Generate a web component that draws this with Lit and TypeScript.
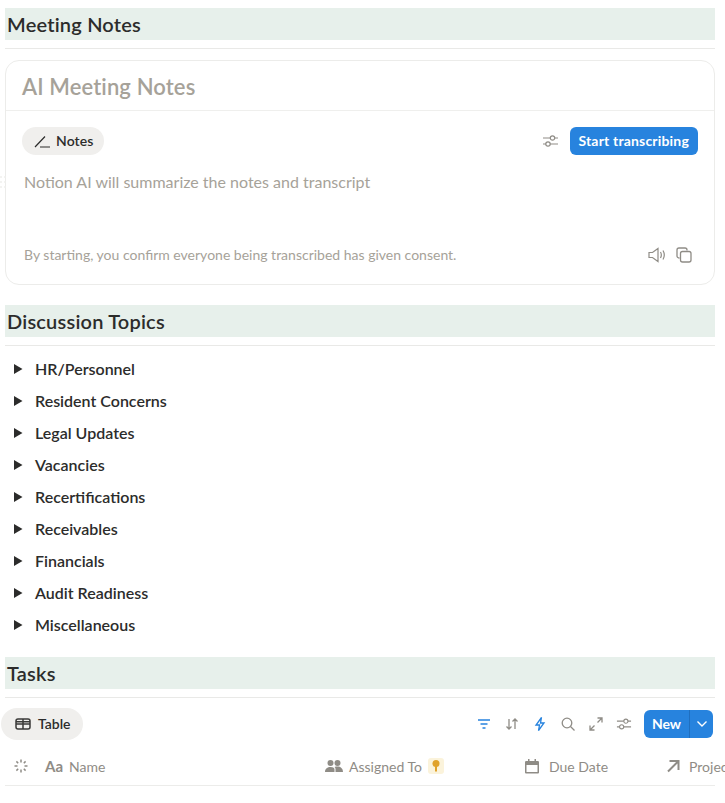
import { LitElement, html, css, svg } from 'lit';
import { customElement } from 'lit/decorators.js';

const TOPICS = [
  'HR/Personnel',
  'Resident Concerns',
  'Legal Updates',
  'Vacancies',
  'Recertifications',
  'Receivables',
  'Financials',
  'Audit Readiness',
  'Miscellaneous',
];

const sliders = svg`<path d="M1 5h15M1 11h15" stroke="currentColor" stroke-width="1.2" fill="none"/><circle cx="10.5" cy="5" r="2.2" fill="#fff" stroke="currentColor" stroke-width="1.2"/><circle cx="6" cy="11" r="2.2" fill="#fff" stroke="currentColor" stroke-width="1.2"/>`;

@customElement('app-root')
export class AppRoot extends LitElement {
  static styles = css`
    :host {
      display: block;
      width: 725px;
      height: 803px;
      overflow: hidden;
      position: relative;
      background: #fff;
      font-family: 'Lato', 'Noto Sans', sans-serif;
      color: #2c2c2b;
    }
    .page {
      padding: 8px 10px 0 5px;
      display: flex;
      flex-direction: column;
    }
    .band {
      height: 32px;
      background: #e7f0eb;
      padding-left: 2px;
      font-size: 20px;
      font-weight: 600;
      letter-spacing: 0.2px;
      line-height: 32px;
      white-space: nowrap;
    }
    .rule {
      height: 1px;
      background: #e9e9e7;
      margin-top: 8px;
    }
    .card {
      margin-top: 11px;
      height: 225px;
      box-sizing: border-box;
      border: 1px solid #ececea;
      border-radius: 14px;
      display: flex;
      flex-direction: column;
    }
    .card-title {
      height: 50px;
      box-sizing: border-box;
      border-bottom: 1px solid #efefed;
      padding-left: 16px;
      font-size: 22px;
      font-weight: 600;
      letter-spacing: 0.12px;
      line-height: 52px;
      color: #a6a299;
    }
    .card-bar {
      display: flex;
      align-items: center;
      justify-content: space-between;
      padding: 16px 16px 0;
    }
    .pill {
      display: flex;
      align-items: center;
      gap: 5px;
      height: 28px;
      box-sizing: border-box;
      padding: 0 10px 2px 12px;
      background: #f0efed;
      border-radius: 14px;
      font-size: 14px;
      font-weight: 600;
      letter-spacing: 0.1px;
      color: #2c2c2b;
    }
    .pill svg {
      margin-top: 2px;
    }
    .bar-right {
      display: flex;
      align-items: center;
      gap: 11px;
    }
    .icon-gray {
      color: #8f8c86;
      display: block;
    }
    .blue-btn {
      height: 28px;
      box-sizing: border-box;
      padding: 0 9px 2px 8px;
      display: flex;
      align-items: center;
      background: #2783de;
      color: #fff;
      border-radius: 6px;
      font-size: 14px;
      font-weight: 700;
      letter-spacing: 0.18px;
    }
    .placeholder {
      margin: 17px 0 0 18px;
      font-size: 16px;
      line-height: 20px;
      color: #a6a299;
    }
    .card-foot {
      margin-top: auto;
      height: 59px;
      box-sizing: border-box;
      padding: 0 22px 0 18px;
      display: flex;
      align-items: center;
      justify-content: space-between;
      font-size: 14px;
      color: #a6a299;
    }
    .foot-icons {
      display: flex;
      gap: 10px;
      align-items: center;
    }
    .section {
      margin-top: 20px;
    }
    .topics {
      padding-top: 6px;
      display: flex;
      flex-direction: column;
    }
    .topic {
      height: 32px;
      display: flex;
      align-items: center;
      gap: 12px;
      padding-left: 8px;
      font-size: 16px;
      font-weight: 600;
    }
    .tri {
      width: 10px;
      height: 10px;
      margin-top: 1px;
      flex: none;
    }
    .tasks {
      margin-top: 17px;
    }
    .toolbar {
      display: flex;
      align-items: center;
      justify-content: space-between;
      margin: 10px 2px 0 -4px;
    }
    .tab {
      height: 32px;
      box-sizing: border-box;
      padding: 0 12px 2px 14px;
      display: flex;
      align-items: center;
      gap: 7px;
      border-radius: 16px;
      background: #f0efed;
      font-size: 14px;
      font-weight: 600;
    }
    .tab svg {
      margin-top: 2px;
    }
    .tools {
      display: flex;
      align-items: center;
      gap: 12px;
    }
    .tools svg {
      display: block;
    }
    .new {
      height: 28px;
      display: flex;
      background: #2783de;
      border-radius: 6px;
      color: #fff;
      font-size: 14px;
      font-weight: 700;
      overflow: hidden;
    }
    .new-label {
      width: 45px;
      justify-content: center;
      padding-bottom: 2px;
      box-sizing: border-box;
      display: flex;
      align-items: center;
    }
    .new-caret {
      width: 24px;
      box-sizing: border-box;
      border-left: 1px solid #1f6fc0;
      display: flex;
      align-items: center;
      justify-content: center;
    }
    .head {
      margin-top: 7px;
      height: 38px;
      border-bottom: 1px solid #ececea;
      display: grid;
      grid-template-columns: 32px 280px 199px 142px 200px;
      align-items: center;
      padding-left: 8px;
      font-size: 14px;
      color: #8f8c86;
      white-space: nowrap;
    }
    .col {
      display: flex;
      align-items: center;
      gap: 6px;
    }
    .col.wide {
      gap: 9px;
    }
    .col svg {
      flex: none;
    }
    .aa {
      font-size: 15px;
      font-weight: 700;
      width: 18px;
    }
    .key {
      width: 16px;
      height: 16px;
      border-radius: 3px;
      background: #fbf3db;
      display: flex;
      align-items: center;
      justify-content: center;
    }
    .drag {
      position: absolute;
      left: 0;
      top: 175px;
    }
  `;

  render() {
    return html`
      <svg class="drag" width="7" height="14" viewBox="0 0 7 14" fill="#efefed">
        <circle cx="1" cy="2" r="1"/><circle cx="5" cy="2" r="1"/>
        <circle cx="1" cy="7" r="1"/><circle cx="5" cy="7" r="1"/>
        <circle cx="1" cy="12" r="1"/><circle cx="5" cy="12" r="1"/>
      </svg>
      <div class="page">
        <div class="band">Meeting Notes</div>
        <div class="rule"></div>
        <div class="card">
          <div class="card-title">AI Meeting Notes</div>
          <div class="card-bar">
            <div class="pill">
              <svg width="17" height="16" viewBox="0 0 17 16" fill="none" stroke="#2c2c2b" stroke-width="1.2">
                <path d="M1 14 11 3.500M6 14h10"/>
              </svg>
              Notes
            </div>
            <div class="bar-right">
              <svg class="icon-gray" width="17" height="16" viewBox="0 0 17 16">${sliders}</svg>
              <div class="blue-btn">Start transcribing</div>
            </div>
          </div>
          <div class="placeholder">Notion AI will summarize the notes and transcript</div>
          <div class="card-foot">
            <span>By starting, you confirm everyone being transcribed has given consent.</span>
            <div class="foot-icons">
              <svg class="icon-gray" width="18" height="16" viewBox="0 0 18 16" fill="none" stroke="currentColor" stroke-width="1.2">
                <path d="M1 5.500h3.500L10 1.500v13l-5.500-4H1z"/>
                <path d="M12.500 5c1 1.800 1 4.200 0 6M15 3.500c1.600 2.800 1.600 6.200 0 9"/>
              </svg>
              <svg class="icon-gray" width="16" height="16" viewBox="0 0 16 16" fill="none" stroke="currentColor" stroke-width="1.300">
                <path d="M3.500 11H3a2 2 0 0 1-2-2V3a2 2 0 0 1 2-2h6a2 2 0 0 1 2 2v.5"/>
                <rect x="4.500" y="4.500" width="10.500" height="10.500" rx="2"/>
              </svg>
            </div>
          </div>
        </div>

        <div class="section">
          <div class="band">Discussion Topics</div>
          <div class="rule"></div>
        </div>
        <div class="topics">
          ${TOPICS.map(
            (t) => html`<div class="topic">
              <svg class="tri" viewBox="0 0 10 10" fill="#2c2c2b"><path d="M1 0 9.500 5 1 10z"/></svg>
              <span>${t}</span>
            </div>`
          )}
        </div>

        <div class="section tasks">
          <div class="band">Tasks</div>
          <div class="rule"></div>
        </div>
        <div class="toolbar">
          <div class="tab">
            <svg width="16" height="14" viewBox="0 0 16 14" fill="none" stroke="#3a3a38" stroke-width="1.500">
              <rect x="1" y="2" width="14" height="10" rx="2"/>
              <path d="M1 7h14M8 2v10M1 4.700h14"/>
            </svg>
            Table
          </div>
          <div class="tools">
            <svg width="16" height="16" viewBox="0 0 16 16" fill="none" stroke="#2783de" stroke-width="1.500">
              <path d="M2 4h12M4.500 8h7M6.500 12h3"/>
            </svg>
            <svg width="16" height="16" viewBox="0 0 16 16" fill="none" stroke="#8f8c86" stroke-width="1.300">
              <path d="M5 3v10M2.500 10.500 5 13l2.500-2.500M11 13V3M8.500 5.500 11 3l2.500 2.500"/>
            </svg>
            <svg width="16" height="16" viewBox="0 0 16 16" fill="none" stroke="#2783de" stroke-width="1.300">
              <path d="M9.500 1.500 4 9h3.500l-1 5.500L12 7H8.500z"/>
            </svg>
            <svg width="16" height="16" viewBox="0 0 16 16" fill="none" stroke="#8f8c86" stroke-width="1.300">
              <circle cx="7" cy="7" r="4.800"/><path d="M10.500 10.500 14.500 14.500"/>
            </svg>
            <svg width="16" height="16" viewBox="0 0 16 16" fill="none" stroke="#8f8c86" stroke-width="1.300">
              <path d="M9.500 6.500 14 2M9.500 2H14v4.500M6.500 9.500 2 14M2 9.500V14h4.500"/>
            </svg>
            <svg class="icon-gray" width="16" height="16" viewBox="0 0 17 16">${sliders}</svg>
            <div class="new">
              <div class="new-label">New</div>
              <div class="new-caret">
                <svg width="12" height="8" viewBox="0 0 12 8" fill="none" stroke="#fff" stroke-width="1.400"><path d="M1.500 1.500 6 6l4.500-4.500"/></svg>
              </div>
            </div>
          </div>
        </div>
        <div class="head">
          <div class="col">
            <svg width="16" height="16" viewBox="0 0 16 16" fill="none" stroke="#8f8c86" stroke-width="1.500">
              <path d="M8 1.500v3M8 11.500v3M1.500 8h3M11.500 8h3M3.400 3.400l1.800 1.800M10.800 10.800l1.800 1.800M3.400 12.600l1.800-1.800M10.800 5.200l1.800-1.800"/>
            </svg>
          </div>
          <div class="col"><span class="aa">Aa</span><span>Name</span></div>
          <div class="col">
            <svg width="18" height="14" viewBox="0 0 18 14" fill="#8f8c86">
              <circle cx="5.500" cy="4" r="3"/><circle cx="12.500" cy="4" r="3"/>
              <path d="M0 13c0-3.500 2.500-5 5.500-5s4 1 4 2.500V13zM10.500 13v-3c0-1-.4-1.600-1-2.100C10.500 7.700 11.500 7.600 12.500 7.600c3 0 5.500 1.900 5.500 5.400z"/>
            </svg>
            <span>Assigned To</span>
            <span class="key">
              <svg width="8" height="12" viewBox="0 0 8 12" fill="#e0a22b">
                <circle cx="4" cy="3.500" r="3.500"/><path d="M3 6h2v5l-1 1-1-1z"/>
              </svg>
            </span>
          </div>
          <div class="col wide">
            <svg width="16" height="16" viewBox="0 0 16 16" fill="#8f8c86">
              <path d="M2 3h12a1.500 1.500 0 0 1 1 1v10.500a1 1 0 0 1-1 1H2a1 1 0 0 1-1-1V4a1.500 1.500 0 0 1 1-1zm.5 4v7h11V7zM4 1h1.500v2H4zM10.500 1H12v2h-1.500z" fill-rule="evenodd"/>
            </svg>
            <span>Due Date</span>
          </div>
          <div class="col wide">
            <svg width="14" height="14" viewBox="0 0 14 14" fill="none" stroke="#8f8c86" stroke-width="2">
              <path d="M2 12.500 12 2.500M3.500 2H12.500V11"/>
            </svg>
            <span>Project</span>
          </div>
        </div>
      </div>
    `;
  }
}
